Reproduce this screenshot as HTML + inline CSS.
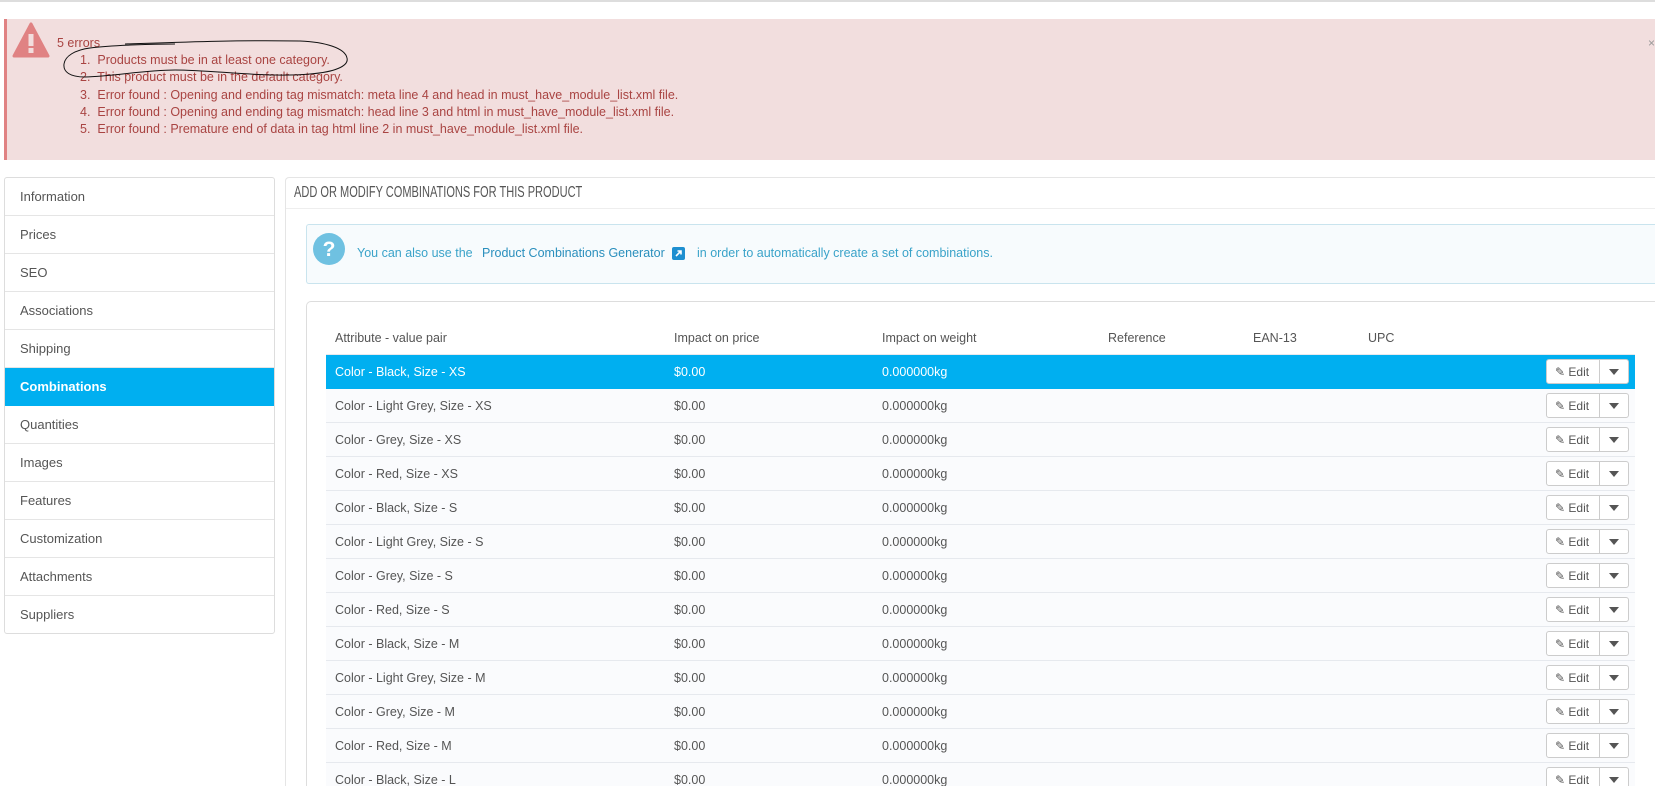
<!DOCTYPE html>
<html><head><meta charset="utf-8"><style>
*{box-sizing:border-box;margin:0;padding:0}
html,body{width:1655px;height:786px;overflow:hidden}
body{background:#fff;font-family:"Liberation Sans",sans-serif;font-size:12.5px;color:#555}
#w{position:relative;width:1655px;height:786px;overflow:hidden}
.a{position:absolute}
.topline{left:0;top:0;width:1655px;height:2px;background:#ddd}
.alert{left:4px;top:19px;width:1651px;height:141px;background:#f2dede;border-left:3px solid #e08283}
.side{left:4px;top:177px;width:271px;height:457px;border:1px solid #ddd;border-radius:3px;background:#fff}
.side div{height:38px;line-height:37px;padding-left:15px;border-bottom:1px solid #e5e5e5;font-size:13px;color:#555}
.side div.on{background:#00aff0;color:#fff;font-weight:bold;border-color:#00aff0}
.panel{left:285px;top:177px;width:1370px;height:609px;border:1px solid #e5e5e5;border-right:none;border-bottom:none;border-radius:4px 0 0 0}
.hd{left:294px;top:184px;font-size:16px;color:#555;transform:scaleX(0.69);transform-origin:0 0;white-space:nowrap}
.hline{left:286px;top:208px;width:1369px;height:1px;background:#eee}
.info{left:306px;top:224px;width:1349px;height:60px;background:#f7fbfd;border:1px solid #c9e4ee;border-right:none;border-radius:3px 0 0 3px}
.tbl{left:306px;top:301px;width:1349px;height:485px;border:1px solid #ddd;border-right:none;border-bottom:none;border-radius:5px 0 0 0}
.row{position:absolute;left:326px;width:1309px;height:34px;background:#fafbfd;border-bottom:1px solid #e6e9ee;font-size:12.5px;color:#555;overflow:hidden}
.row span{position:absolute;top:10px;white-space:nowrap}
.row.on{background:#00aff0;color:#fff;border-bottom:none}
.btn{position:absolute;left:1220px;top:4px;width:83px;height:25px;background:#fff;border:1px solid #ccc;border-radius:3px;color:#555}
.btn .e{position:absolute;left:8px;top:5px;font-size:12px;color:#555}
.btn .s{position:absolute;left:52px;top:0;width:1px;height:23px;background:#ccc}
.btn .c{position:absolute;left:62px;top:9px;width:0;height:0;border-left:5px solid transparent;border-right:5px solid transparent;border-top:6px solid #555}
</style></head><body><div id="w">
<div class="a topline"></div>
<div class="a alert"></div>
<svg class="a" style="left:12px;top:22px" width="38" height="36" viewBox="0 0 38 36"><path d="M19 2 L36 34 L2 34 Z" fill="#e08283" stroke="#e08283" stroke-width="3" stroke-linejoin="round"/><rect x="16.5" y="12" width="5" height="12" fill="#f2dede"/><rect x="16.5" y="26" width="5" height="5" fill="#f2dede"/></svg>
<div class="a" style="left:57px;top:36px;color:#a94442;font-size:12.5px">5 errors</div>
<div class="a" style="left:80px;top:52px;color:#a94442;font-size:12.5px;line-height:17.3px;white-space:nowrap">
1.&nbsp; Products must be in at least one category.<br>
2.&nbsp; This product must be in the default category.<br>
3.&nbsp; Error found : Opening and ending tag mismatch: meta line 4 and head in must_have_module_list.xml file.<br>
4.&nbsp; Error found : Opening and ending tag mismatch: head line 3 and html in must_have_module_list.xml file.<br>
5.&nbsp; Error found : Premature end of data in tag html line 2 in must_have_module_list.xml file.
</div>
<svg class="a" style="left:55px;top:36px" width="310" height="46"><path d="M70 8 C130 6 180 4 245 5 C270 6 290 12 292 22 C294 30 280 36 255 38 C210 42 160 34 120 34 C90 34 60 40 30 41 C15 41 8 36 9 28 C10 20 20 14 35 12 C60 9 100 8 120 8" fill="none" stroke="#111" stroke-width="1"/></svg>
<div class="a" style="left:1648px;top:36px;color:#999;font-size:12px">×</div>

<div class="a side">
<div>Information</div><div>Prices</div><div>SEO</div><div>Associations</div><div>Shipping</div><div class="on">Combinations</div><div>Quantities</div><div>Images</div><div>Features</div><div>Customization</div><div>Attachments</div><div style="border-bottom:none">Suppliers</div>
</div>

<div class="a panel"></div>
<div class="a hd">ADD OR MODIFY COMBINATIONS FOR THIS PRODUCT</div>
<div class="a hline"></div>
<div class="a info"></div>
<svg class="a" style="left:313px;top:233px" width="32" height="32"><circle cx="16" cy="16" r="16" fill="#6fc1e1"/><text x="16" y="23" text-anchor="middle" font-family="Liberation Sans" font-weight="bold" font-size="21" fill="#fff">?</text></svg>
<div class="a" style="left:357px;top:246px;color:#3aa3c9;font-size:12.5px;white-space:nowrap">You can also use the</div>
<div class="a" style="left:482px;top:246px;color:#2a8fbd;font-size:12.5px;white-space:nowrap">Product Combinations Generator</div>
<svg class="a" style="left:672px;top:247px" width="13" height="13"><rect width="13" height="13" rx="2" fill="#1e8fd0"/><path d="M4 9 L9 4 M5.5 4 H9 V7.5" stroke="#fff" stroke-width="1.6" fill="none"/></svg>
<div class="a" style="left:697px;top:246px;color:#3aa3c9;font-size:12.5px;white-space:nowrap">in order to automatically create a set of combinations.</div>

<div class="a tbl"></div>
<div class="a" style="left:335px;top:331px;font-size:12.5px;color:#555">Attribute - value pair</div>
<div class="a" style="left:674px;top:331px;font-size:12.5px;color:#555">Impact on price</div>
<div class="a" style="left:882px;top:331px;font-size:12.5px;color:#555">Impact on weight</div>
<div class="a" style="left:1108px;top:331px;font-size:12.5px;color:#555">Reference</div>
<div class="a" style="left:1253px;top:331px;font-size:12.5px;color:#555">EAN-13</div>
<div class="a" style="left:1368px;top:331px;font-size:12.5px;color:#555">UPC</div>
<div class="a" style="left:326px;top:354px;width:1309px;height:1px;background:#e6e9ee"></div>

<div id="rows"></div>
</div>
<script>
var n=["Color - Black, Size - XS","Color - Light Grey, Size - XS","Color - Grey, Size - XS","Color - Red, Size - XS","Color - Black, Size - S","Color - Light Grey, Size - S","Color - Grey, Size - S","Color - Red, Size - S","Color - Black, Size - M","Color - Light Grey, Size - M","Color - Grey, Size - M","Color - Red, Size - M","Color - Black, Size - L"];
var h="";
for(var i=0;i<n.length;i++){
var t=355+i*34, hh=Math.min(34,786-t);
h+='<div class="row'+(i==0?' on':'')+'" style="top:'+t+'px;height:'+hh+'px'+(hh<34?';border-bottom:none':'')+'"><span style="left:9px">'+n[i]+'</span><span style="left:348px">$0.00</span><span style="left:556px">0.000000kg</span><div class="btn"><span class="e">&#9998; Edit</span><div class="s"></div><div class="c"></div></div></div>';
}
document.getElementById("rows").innerHTML=h;
</script>
</body></html>
